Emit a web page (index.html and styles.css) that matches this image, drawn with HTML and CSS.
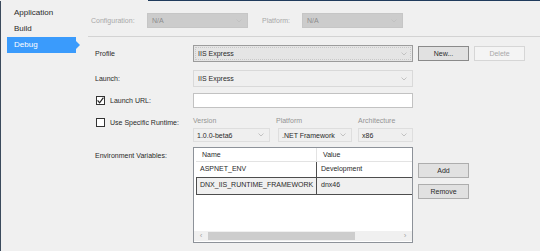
FILE: index.html
```html
<!DOCTYPE html>
<html lang="en">

<head>
    <meta charset="UTF-8">
    <meta name="viewport" content="width=device-width, initial-scale=1.0">
    <title>Debug</title>
    <link rel="stylesheet" href="styles.css">
</head>

<body>
    <div class="topline"></div>
    <div class="window">
        <div class="sidebar">
            <div class="nav-item">Application</div>
            <div class="nav-item">Build</div>
            <div class="nav-item active">Debug</div>
        </div>

        <div class="page">
            <div class="toolbar">
                <span class="tb-label conf-label">Configuration:</span>
                <div class="combo disabled tb-combo">
                    <span>N/A</span>
                    <svg class="arrow" width="6" height="4" viewBox="0 0 6 4"><polyline points="0.5,0.5 3,3 5.5,0.5" /></svg>
                </div>
                <span class="tb-label plat-label">Platform:</span>
                <div class="combo disabled tb-combo">
                    <span>N/A</span>
                    <svg class="arrow" width="6" height="4" viewBox="0 0 6 4"><polyline points="0.5,0.5 3,3 5.5,0.5" /></svg>
                </div>
            </div>

            <div class="form">
                <div class="row row-profile">
                    <div class="label">Profile</div>
                    <div class="combo profile">
                        <span>IIS Express</span>
                        <svg class="arrow" width="6" height="4" viewBox="0 0 6 4"><polyline points="0.5,0.5 3,3 5.5,0.5" /></svg>
                    </div>
                    <button class="btn default">New...</button>
                    <button class="btn disabled">Delete</button>
                </div>

                <div class="row row-launch">
                    <div class="label">Launch:</div>
                    <div class="combo flat launch">
                        <span>IIS Express</span>
                        <svg class="arrow" width="6" height="4" viewBox="0 0 6 4"><polyline points="0.5,0.5 3,3 5.5,0.5" /></svg>
                    </div>
                </div>

                <div class="row row-url">
                    <div class="label">
                        <span class="check">
                            <svg width="7" height="7" viewBox="0 0 7 7"><polyline points="0.6,3.4 2.6,5.8 6.4,0.6" /></svg>
                        </span>
                        Launch URL:
                    </div>
                    <div class="textbox"></div>
                </div>

                <div class="row row-runtime">
                    <div class="label">
                        <span class="check"></span>
                        Use Specific Runtime:
                    </div>
                    <div class="rt-fields">
                        <div class="rt-field rt-version">
                            <div class="caption">Version</div>
                            <div class="combo flat small">
                                <span>1.0.0-beta6</span>
                                <svg class="arrow" width="6" height="4" viewBox="0 0 6 4"><polyline points="0.5,0.5 3,3 5.5,0.5" /></svg>
                            </div>
                        </div>
                        <div class="rt-field rt-platform">
                            <div class="caption">Platform</div>
                            <div class="combo flat small">
                                <span>.NET Framework</span>
                                <svg class="arrow" width="6" height="4" viewBox="0 0 6 4"><polyline points="0.5,0.5 3,3 5.5,0.5" /></svg>
                            </div>
                        </div>
                        <div class="rt-field rt-arch">
                            <div class="caption">Architecture</div>
                            <div class="combo flat small">
                                <span>x86</span>
                                <svg class="arrow" width="6" height="4" viewBox="0 0 6 4"><polyline points="0.5,0.5 3,3 5.5,0.5" /></svg>
                            </div>
                        </div>
                    </div>
                </div>

                <div class="row row-env">
                    <div class="label env-label">Environment Variables:</div>
                    <div class="grid">
                        <div class="grid-head">
                            <div class="cell col-name">Name</div>
                            <div class="cell col-value">Value</div>
                        </div>
                        <div class="grid-row first">
                            <div class="cell col-name">ASPNET_ENV</div>
                            <div class="cell col-value">Development</div>
                        </div>
                        <div class="grid-row selected">
                            <div class="cell col-name">DNX_IIS_RUNTIME_FRAMEWORK</div>
                            <div class="cell col-value">dnx46</div>
                        </div>
                        <div class="grid-fill"></div>
                        <div class="hscroll">
                            <span class="sb-arrow">&lsaquo;</span>
                            <span class="sb-thumb"></span>
                            <span class="sb-track"></span>
                            <span class="sb-arrow">&rsaquo;</span>
                        </div>
                    </div>
                    <div class="env-buttons">
                        <button class="btn">Add</button>
                        <button class="btn remove">Remove</button>
                    </div>
                </div>
            </div>
        </div>
    </div>
</body>

</html>
```

FILE: styles.css
```css
body {
    margin: 0;
    background-color: #f0f0f0;
    font-family: "Liberation Sans", Arial, sans-serif;
    font-size: 7px;
    color: #2a2a2a;
}

.topline {
    height: 1px;
    margin-left: 148px;
    background-color: #1f3b5c;
}

.window {
    display: flex;
    height: 250px;
    border-left: 1px solid #3b4a5c;
}

/* left navigation */

.sidebar {
    width: 79px;
    flex: none;
    padding-top: 4px;
}

.nav-item {
    height: 16px;
    line-height: 16px;
    padding-left: 13px;
    font-size: 8px;
    color: #2a2a2a;
}

.nav-item.active {
    position: relative;
    margin-left: 6px;
    width: 69px;
    padding-left: 7px;
    box-sizing: border-box;
    background-color: #3a9bfc;
    color: #fff;
}

.nav-item.active::after {
    content: "";
    position: absolute;
    left: 100%;
    top: 4px;
    border-left: 4px solid #3a9bfc;
    border-top: 4px solid transparent;
    border-bottom: 4px solid transparent;
}

/* page */

.page {
    flex: 1;
}

.toolbar {
    display: flex;
    align-items: center;
    margin-left: 8px;
    padding: 12px 0 8px 3px;
    border-bottom: 1px solid #d3d3d3;
}

.tb-label {
    color: #a8a8a8;
}

.conf-label {
    width: 56px;
}

.plat-label {
    width: 40px;
    margin-left: 14px;
}

.combo {
    display: flex;
    align-items: center;
    justify-content: space-between;
    box-sizing: border-box;
    border: 1px solid #d9d9d9;
    padding: 0 5px 0 4px;
    background-color: #efefef;
    color: #2a2a2a;
}

.arrow {
    flex: none;
}

.arrow polyline {
    fill: none;
    stroke: #c2c2c2;
    stroke-width: 1;
}

.tb-combo {
    width: 101px;
    height: 15px;
}

.combo.disabled {
    background-color: #cccccc;
    border-color: #c6c6c6;
    color: #8c8c8c;
}

.form {
    padding-left: 15px;
}

.row {
    display: flex;
    align-items: center;
}

.label {
    display: flex;
    align-items: center;
    width: 98px;
    flex: none;
}

.row-profile {
    margin-top: 8px;
}

.combo.profile {
    position: relative;
    width: 220px;
    height: 17px;
    background-color: #e5e5e5;
    border-color: #9c9c9c;
}

.combo.profile::before {
    content: "";
    position: absolute;
    top: 1px;
    left: 1px;
    right: 1px;
    bottom: 1px;
    border: 1px dotted #c8c8c8;
}

.combo.profile span {
    position: relative;
}

.btn {
    width: 51px;
    height: 15px;
    margin-left: 5px;
    padding: 0;
    border: 1px solid #adadad;
    background-color: #e1e1e1;
    font-family: "Liberation Sans", Arial, sans-serif;
    font-size: 7px;
    color: #2a2a2a;
}

.btn.default {
    border-color: #8a8a8a;
}

.btn.disabled {
    background-color: #f4f4f4;
    border-color: #d6d6d6;
    color: #a8a8a8;
}

.row-launch {
    margin-top: 8px;
}

.combo.launch {
    width: 220px;
    height: 17px;
}

.row-url {
    margin-top: 6px;
}

.check {
    display: flex;
    align-items: center;
    justify-content: center;
    width: 9px;
    height: 9px;
    margin-left: 1px;
    margin-right: 5px;
    box-sizing: border-box;
    border: 1px solid #333;
    background-color: #fff;
}

.check polyline {
    fill: none;
    stroke: #222;
    stroke-width: 1.2;
}

.textbox {
    width: 220px;
    height: 15px;
    box-sizing: border-box;
    border: 1px solid #c2c2c2;
    background-color: #fff;
}

/* runtime */

.row-runtime {
    margin-top: 8px;
    align-items: flex-start;
}

.row-runtime .label {
    height: 12px;
}

.rt-fields {
    display: flex;
    width: 220px;
}

.rt-field {
    display: flex;
    flex-direction: column;
}

.caption {
    height: 10px;
    line-height: 10px;
    color: #949494;
}

.combo.small {
    height: 14px;
    margin-top: 2px;
    padding-left: 3px;
    border-color: #dedede;
}

.rt-version {
    width: 77px;
}

.rt-platform {
    width: 74px;
    margin-left: 8px;
}

.rt-platform .caption {
    margin-left: -2px;
}

.rt-arch {
    width: 55px;
    margin-left: 6px;
}

/* environment variables */

.row-env {
    margin-top: 5px;
    align-items: flex-start;
}

.env-label {
    height: 16px;
}

.grid {
    display: flex;
    flex-direction: column;
    width: 220px;
    height: 96px;
    box-sizing: border-box;
    border: 1px solid #8d9299;
    background-color: #fff;
}

.grid-head,
.grid-row {
    display: flex;
    margin-left: 2px;
}

.cell {
    box-sizing: border-box;
    line-height: 13px;
    padding-left: 4px;
    white-space: nowrap;
}

.col-name {
    width: 121px;
}

.col-value {
    flex: 1;
}

.grid-head {
    height: 13px;
}

.grid-head .cell {
    padding-left: 6px;
}

.grid-head .col-name {
    border-right: 1px solid #e3e3e3;
}

.grid-row {
    height: 15px;
    border-top: 1px solid #e3e3e3;
}

.grid-row .cell {
    line-height: 14px;
}

.grid-row.first .col-name {
    border-right: 1px solid #4d4d4d;
}

.grid-row.selected {
    height: 16px;
    border-top: 1px solid #4d4d4d;
    border-bottom: 1px solid #4d4d4d;
    border-left: 1px solid #4d4d4d;
    background-color: #f0f0f0;
}

.grid-row.selected .col-name {
    width: 120px;
    padding-left: 3px;
    border-right: 1px solid #4d4d4d;
}

.grid-fill {
    flex: 1;
}

.hscroll {
    display: flex;
    align-items: center;
    height: 10px;
    margin: 0 0 1px 0;
    background-color: #f0f0f0;
}

.sb-arrow {
    width: 14px;
    text-align: center;
    color: #a6a6a6;
    font-size: 8px;
    line-height: 10px;
}

.sb-thumb {
    width: 147px;
    height: 8px;
    background-color: #cdcdcd;
}

.sb-track {
    flex: 1;
}

.env-buttons {
    display: flex;
    flex-direction: column;
    padding-top: 16px;
}

.env-buttons .remove {
    margin-top: 6px;
}
```
